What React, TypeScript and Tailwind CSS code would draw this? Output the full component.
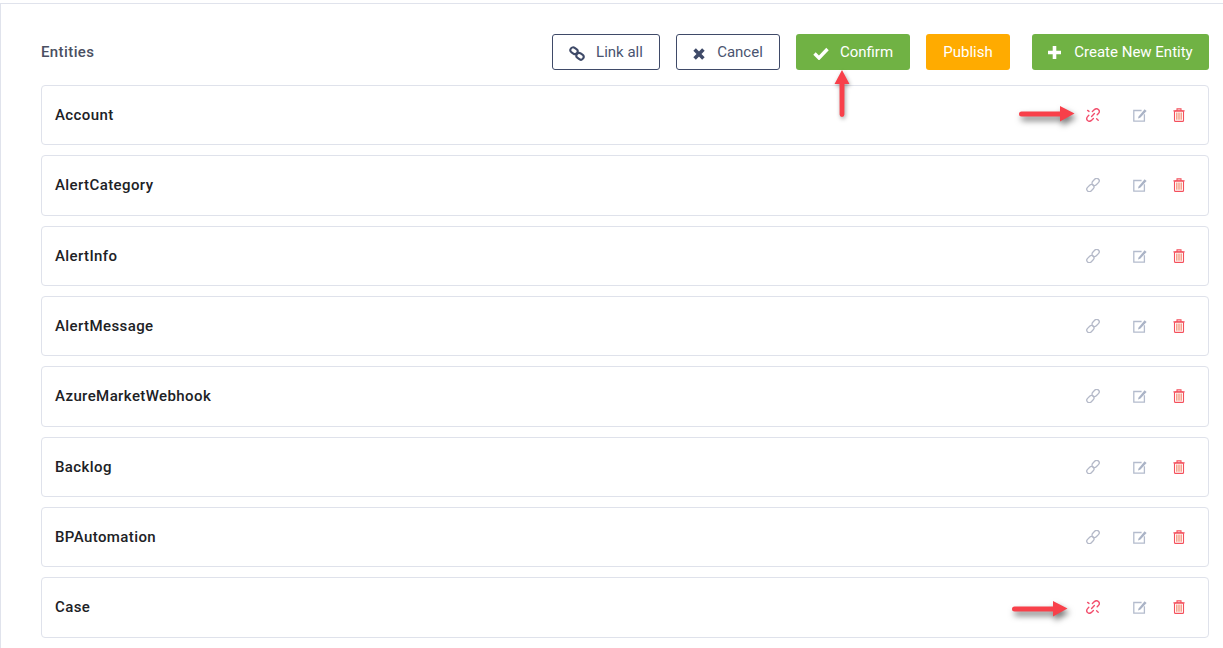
import React from "react";

const names = ["Account", "AlertCategory", "AlertInfo", "AlertMessage", "AzureMarketWebhook", "Backlog", "BPAutomation", "Case", ""];
const broken = new Set(["Account", "Case"]);

function LinkAllIcon() {
  return (
    <svg className="mt-[2px]" width="16" height="15" viewBox="0 0 16 15" fill="none" stroke="#3f4a68" strokeWidth="2.1">
      <rect x="1.2" y="2" width="7.6" height="5.4" rx="2.7" transform="rotate(35 5 4.7)" />
      <rect x="7.2" y="7.6" width="7.6" height="5.4" rx="2.7" transform="rotate(35 11 10.3)" />
    </svg>
  );
}

function CrossIcon() {
  return (
    <svg className="mt-[3px]" width="12" height="12" viewBox="0 0 12 12" fill="none" stroke="#3f4a68" strokeWidth="3.6">
      <path d="M1.6 1.6 10.4 10.4M10.4 1.6 1.6 10.4" />
    </svg>
  );
}

function CheckIcon() {
  return (
    <svg className="mt-[2px]" width="16" height="13" viewBox="0 0 16 13" fill="none" stroke="#fff" strokeWidth="3.4">
      <path d="M1.5 6.5 6 11 14.5 2" />
    </svg>
  );
}

function PlusIcon() {
  return (
    <svg className="mt-[1px]" width="13" height="13" viewBox="0 0 13 13" fill="none" stroke="#fff" strokeWidth="3.6">
      <path d="M6.5 0V13M0 6.5H13" />
    </svg>
  );
}

function ChainIcon() {
  return (
    <svg width="14" height="14" viewBox="0 0 14 14" fill="none" stroke="#b4b9c8" strokeWidth="1.3">
      <rect x="5.6" y="1.4" width="8" height="5" rx="2.5" transform="rotate(-45 9.6 3.9)" />
      <rect x="0.4" y="7.6" width="8" height="5" rx="2.5" transform="rotate(-45 4.4 10.1)" />
    </svg>
  );
}

function BrokenIcon() {
  return (
    <svg width="14" height="14" viewBox="0 0 14 14" fill="none" stroke="#f2506e" strokeWidth="1.4" strokeLinecap="round">
      <path d="M6.4 3.6 8.4 1.6C9.8.5 11.6.6 12.6 1.7 13.6 2.8 13.5 4.4 12.4 5.6L11.2 6.8" />
      <path d="M2.8 7.2 1.6 8.6C.5 9.9.6 11.6 1.6 12.6 2.7 13.6 4.2 13.4 5.4 12.4L7.4 10.4" />
      <path d="M1.6 2.4 3 3.4M10.6 10.8 12.2 12.2M5.6 8.4 8.4 5.6" />
    </svg>
  );
}

function EditIcon() {
  return (
    <svg width="14" height="14" viewBox="0 0 14 14" fill="none">
      <path d="M8.6 2.5H.8V13.2H11.4V6.2" stroke="#b4bccd" strokeWidth="1.3" />
      <path d="M5.6 8.6 11.6 1.2 13.6 2.9 7.2 9.8 5 10.6Z" fill="#aab3c6" />
    </svg>
  );
}

function TrashIcon() {
  return (
    <svg width="12" height="14" viewBox="0 0 12 14" fill="none" stroke="#f4505c" strokeWidth="1.1">
      <path d="M.4 2.9H11.6M4 2.8V.9H8V2.8" />
      <rect x="1.5" y="3" width="9" height="10.4" rx="1" />
      <path d="M3.8 4.6V11.8M6 4.6V11.8M8.2 4.6V11.8" stroke="#f59a80" strokeWidth="1.4" />
    </svg>
  );
}

function RedArrow({ className, vertical }: { className: string; vertical?: boolean }) {
  return vertical ? (
    <svg className={`${className} drop-shadow-[1px_2px_2px_rgba(0,0,0,0.35)]`} width="16" height="47" viewBox="0 0 16 47">
      <path d="M8 0 15.5 14H10.5L10.4 44.5a2.4 2.4 0 0 1-4.8 0L5.5 14H.5Z" fill="#f8404a" />
    </svg>
  ) : (
    <svg className={`${className} drop-shadow-[2px_4px_3px_rgba(0,0,0,0.55)]`} width="56" height="16" viewBox="0 0 56 16">
      <path d="M2.5 5.4H41V0L55.5 7.5 41 15.5V10.4H2.5a2.5 2.5 0 0 1 0-5Z" fill="#f8404a" />
    </svg>
  );
}

const outline = "flex h-9 items-center rounded-[3px] border border-[#3f4a68] bg-white text-[#4a5470]";
const solid = "flex h-9 items-center rounded-[3px] text-white";

export default function App() {
  return (
    <div className="h-[648px] w-[1223px] overflow-hidden bg-white pt-[3px] font-['Roboto',sans-serif] text-[15px]">
      <div className="relative h-full border-l border-t border-[#e0e3ec] pl-10 pr-[14px] pt-[30px]">
        <div className="flex h-9 items-center">
          <h1 className="pt-[1px] text-[15px] font-medium tracking-[0.4px] text-[#4a4f62]">Entities</h1>
          <div className="ml-auto flex items-center">
            <button className={`${outline} w-[108px] justify-center gap-[11px]`}>
              <LinkAllIcon />
              Link all
            </button>
            <button className={`${outline} ml-4 w-[104px] justify-center gap-[12px]`}>
              <CrossIcon />
              Cancel
            </button>
            <button className={`${solid} ml-4 w-[114px] justify-center gap-[11px] bg-[#70b244]`}>
              <CheckIcon />
              Confirm
            </button>
            <button className={`${solid} ml-4 w-[84px] justify-center bg-[#ffab00]`}>Publish</button>
            <button className={`${solid} ml-[22px] w-[177px] justify-center gap-[13px] bg-[#70b244]`}>
              <PlusIcon />
              Create New Entity
            </button>
          </div>
        </div>
        <div className="mt-[15px] flex flex-col gap-[10px]">
          {names.map((n) => (
            <div key={n} className="flex h-[60.33px] shrink-0 items-center rounded-[4px] border border-[#dfe2eb] pl-[13px] pr-[23px]">
              <span className="text-[15px] font-medium tracking-[0.4px] text-[#202125]">{n}</span>
              <div className="ml-auto flex items-center">
                {broken.has(n) ? <BrokenIcon /> : <ChainIcon />}
                <span className="ml-[33px]"><EditIcon /></span>
                <span className="ml-[26px]"><TrashIcon /></span>
              </div>
            </div>
          ))}
        </div>
        <RedArrow vertical className="absolute left-[833px] top-[66px]" />
        <RedArrow className="absolute left-[1018px] top-[102px]" />
        <RedArrow className="absolute left-[1011px] top-[597px]" />
      </div>
    </div>
  );
}
